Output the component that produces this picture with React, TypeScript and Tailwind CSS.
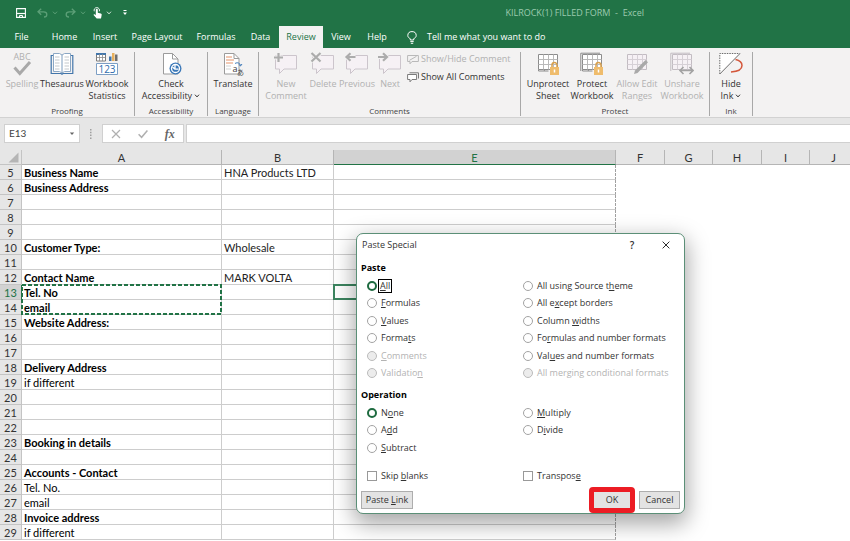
import type { ReactNode } from 'react';
import clsx from 'clsx';

type RibbonButtonProps = {
  icon: ReactNode;
  lines: string[];
  width: string;
  disabled?: boolean;
  menu?: boolean;
};

const TABS = [
  { name: 'File', width: 'w-[43px]' },
  { name: 'Home', width: 'w-[43px]' },
  { name: 'Insert', width: 'w-[38px]' },
  { name: 'Page Layout', width: 'w-[66px]' },
  { name: 'Formulas', width: 'w-[52px]' },
  { name: 'Data', width: 'w-[37px]' },
  { name: 'Review', width: 'w-[44px]' },
  { name: 'View', width: 'w-[36px]' },
  { name: 'Help', width: 'w-[36px]' },
];

const ROWS: { n: number; a?: string; b?: string; bold?: boolean }[] = [
  { n: 5, a: 'Business Name', b: 'HNA Products LTD', bold: true },
  { n: 6, a: 'Business Address', bold: true },
  { n: 7 },
  { n: 8 },
  { n: 9 },
  { n: 10, a: 'Customer Type:', b: 'Wholesale', bold: true },
  { n: 11 },
  { n: 12, a: 'Contact Name', b: 'MARK VOLTA', bold: true },
  { n: 13, a: 'Tel. No', bold: true },
  { n: 14, a: 'email', bold: true },
  { n: 15, a: 'Website Address:', bold: true },
  { n: 16 },
  { n: 17 },
  { n: 18, a: 'Delivery Address', bold: true },
  { n: 19, a: 'if different' },
  { n: 20 },
  { n: 21 },
  { n: 22 },
  { n: 23, a: 'Booking in details', bold: true },
  { n: 24 },
  { n: 25, a: 'Accounts - Contact', bold: true },
  { n: 26, a: 'Tel. No.' },
  { n: 27, a: 'email' },
  { n: 28, a: 'Invoice address', bold: true },
  { n: 29, a: 'if different' },
];

// "_" goes before the access key letter
const PASTE_LEFT = ['_All', '_Formulas', '_Values', 'Forma_ts', '_Comments', 'Validatio_n'];
const PASTE_RIGHT = [
  'All using Source t_heme',
  'All e_xcept borders',
  'Column _widths',
  'Fo_rmulas and number formats',
  'Val_ues and number formats',
  'All mer_ging conditional formats',
];
const PASTE_DISABLED = ['_Comments', 'Validatio_n', 'All mer_ging conditional formats'];

function Caret({ className }: { className?: string }) {
  return (
    <svg viewBox="0 0 6 4" className={clsx('h-1 w-1.5 shrink-0', className)} fill="none" stroke="currentColor">
      <path d="M1 .7 3 2.9 5 .7" />
    </svg>
  );
}

function SaveIcon() {
  return (
    <svg viewBox="0 0 10 10" className="h-2.5 w-2.5" fill="none" stroke="#fff">
      <path d="M.6.6h8.8v8.8H.6z" strokeWidth="1.1" />
      <path d="M1 5.5h8" strokeWidth="1.2" />
      <path d="M3.500 9V7.500h3V9" />
    </svg>
  );
}

function UndoIcon({ flip }: { flip?: boolean }) {
  return (
    <svg viewBox="0 0 11 10" className={clsx('h-2.5 w-[11px]', flip && '-scale-x-100')} fill="none" stroke="#5c9f77" strokeWidth="1.3">
      <path d="M4.2.8 1 3.8l3.2 3M1 3.8h5.6c2 0 3.2 1 3.2 2.6S8.600 9 7 9" />
    </svg>
  );
}

function TouchIcon() {
  return (
    <svg viewBox="0 0 9 12" className="h-3 w-[9px]">
      <path d="M1.300 4.300A2.700 2.700 0 1 1 6.300 4.300" fill="none" stroke="#fff" strokeWidth=".9" />
      <path d="M2.800 2.800c0-1.400 2-1.400 2 0v3l3 .7c.7.2 1 .6.900 1.300L8 11.600H3.700L.8 8.300c-.6-.9.500-1.500 1.200-.9l.8.8z" fill="#fff" />
    </svg>
  );
}

function BulbIcon() {
  return (
    <svg viewBox="0 0 10 13" className="h-[13px] w-2.5" fill="none" stroke="#fff">
      <path d="M3.300 9V7.700C1.700 6.900.8 5.900.8 4.600a4.200 4 0 0 1 8.400 0c0 1.300-.9 2.300-2.500 3.100V9z" />
      <path d="M3.300 10.600h3.400M3.800 12.300h2.400" />
    </svg>
  );
}

function SpellingIcon() {
  return (
    <svg viewBox="0 0 24 24" className="h-6 w-6 overflow-visible">
      <text x="12" y="8" textAnchor="middle" fontSize="9" fill="#b0b0b0" fontFamily="Open Sans, sans-serif">ABC</text>
      <path d="m4.500 15.500 5.300 6L20 10" fill="none" stroke="#a9a9a9" strokeWidth="3" />
    </svg>
  );
}

function BookIcon() {
  return (
    <svg viewBox="0 0 24 24" className="h-6 w-6" fill="none">
      <path d="M3.500 1.500h6L12 3l2.500-1.500h6v18h-6L12 21l-2.500-1.500h-6z" fill="#fff" stroke="#8ba7c4" />
      <path d="M3 3.500H1.200v18H11l1 .8 1-.8h9.800v-18H21" stroke="#4276ab" strokeWidth="1.200" />
      <path d="M12 3v18" stroke="#7d9cbd" />
      <path d="M5 5h4.500M5 8h4.500M5 11h4.500M5 14h4.500M5 17h4.500M14.500 5H19M14.500 8H19M14.500 11H19M14.500 14H19M14.500 17H19" stroke="#b4babf" strokeWidth=".8" />
    </svg>
  );
}

function StatisticsIcon() {
  return (
    <svg viewBox="0 0 24 24" className="h-6 w-6" fill="none">
      <path d="M1.500 1.500h9v7.500h-9z" fill="#fff" stroke="#7b7b7b" />
      <path d="M1 2h10" stroke="#4276ab" strokeWidth="2" />
      <path d="M4.500 2v7M7.500 2v7M1.500 5.500h9" stroke="#8b8b8b" strokeWidth=".8" />
      <path d="M14 4.500h2.500V9H14z" fill="#4276ab" />
      <path d="M17 1h2.500v8H17z" fill="#e8b05c" />
      <path d="M20 2.500h2.500V9H20z" fill="#6f6f6f" />
      <path d="M1.500 11.500h21v11h-21z" fill="#fff" stroke="#7d9fc4" />
      <text x="12" y="21" textAnchor="middle" fontSize="10" fill="#2f6cad" fontFamily="Open Sans, sans-serif">123</text>
    </svg>
  );
}

function AccessibilityIcon() {
  return (
    <svg viewBox="0 0 24 24" className="h-6 w-6" fill="none">
      <path d="M4.500 1.500h9L19 7v15H4.500z" fill="#fff" stroke="#9b9b9b" />
      <path d="M13.500 1.500V7H19" stroke="#9b9b9b" />
      <circle cx="16.500" cy="16.500" r="6" fill="#3b78b8" />
      <circle cx="16.500" cy="16.500" r="4" stroke="#fff" strokeWidth="1.300" />
      <path d="M16 13v4.200h3.500M13.500 15l2.500 2.200" stroke="#fff" strokeWidth="1.300" />
    </svg>
  );
}

function TranslateIcon() {
  return (
    <svg viewBox="0 0 24 24" className="h-6 w-6" fill="none">
      <path d="M3.500 1.500h9.500L18 6.500V22H3.500z" fill="#fff" stroke="#9b9b9b" />
      <path d="M13 1.500v5h5" stroke="#9b9b9b" />
      <path d="M5 5h6M5 8h8M5 11h7" stroke="#e5946a" strokeWidth="1.100" />
      <path d="M5 14h5M5 17h5" stroke="#d3d3d3" />
      <path d="M14 11.500c2.500-1.500 5-.5 5.500 2m-1.800-1.200 1.800 1.700 1.500-2" stroke="#3b78b8" />
      <text x="11.500" y="20" fontSize="9" fill="#3c3c3c" fontFamily="Open Sans, sans-serif">a</text>
      <text x="16" y="22.500" fontSize="7" fill="#3c3c3c" fontFamily="Noto Sans CJK JP, sans-serif">あ</text>
    </svg>
  );
}

function CommentIcon({ mark }: { mark: 'plus' | 'cross' | 'left' | 'right' }) {
  const marks = {
    plus: 'M4.500 1v9M0 5.500h9',
    cross: 'M.5 1l9 8.500M9.500 1l-9 8.500',
    left: 'M10.500 5H1.500M5.500 1.300 1.500 5l4 3.700',
    right: 'M0 5h9M5 1.300 9 5 5 8.700',
  };
  return (
    <svg viewBox="0 0 24 24" className="h-6 w-6 overflow-visible" fill="none">
      <path d="M1.500 3.500h21v13.500H10L5.500 21.500V17h-4z" fill="#f6f1f5" stroke="#ccc5cc" />
      <path d={marks[mark]} stroke="#f3f2f2" strokeWidth="4" />
      <path d={marks[mark]} stroke="#acacac" strokeWidth="2.200" />
    </svg>
  );
}

function SmallCommentIcon({ double }: { double?: boolean }) {
  return (
    <svg viewBox="0 0 12 11" className="h-[11px] w-3" fill="none" stroke={double ? '#7b7b7b' : '#b9b9b9'}>
      {double ? (
        <>
          <path d="M2.500.8h9v5.700" />
          <path d="M.6 2.500h9v5H5L3 9.800V7.500H.6z" fill="#fff" />
        </>
      ) : (
        <>
          <path d="M.6 1.500h10.800v6H5L3 9.800V7.500H.6z" />
          <path d="m2.500 6.300 7-4" />
        </>
      )}
    </svg>
  );
}

function SheetIcon({ faded, double, children }: { faded?: boolean; double?: boolean; children?: ReactNode }) {
  const stroke = faded ? '#c2bcc2' : '#8c8c8c';
  return (
    <svg viewBox="0 0 24 24" className="h-6 w-6" fill="none">
      {double && <path d="M.8 19V1.200H20" stroke={stroke} />}
      <path d="M2.500 2.500h19v15h-19z" fill={faded ? '#f6f1f5' : '#fff'} stroke={stroke} />
      <path d="M7.500 2.500v15M12.500 2.500v15M17.500 2.500v15M2.500 7.500h19M2.500 12.500h19" stroke={faded ? '#d6d0d6' : '#b9b9b9'} />
      {!faded && <path d="M2.500 17.500v1.500h10M8 19l1-1.500" stroke={stroke} />}
      {children}
    </svg>
  );
}

function Lock() {
  return (
    <>
      <path d="M16 16v-3a2.500 2.500 0 0 1 5 0v3" stroke="#d9a04b" strokeWidth="1.500" />
      <path d="M14 15h9v8h-9z" fill="#efbc6c" />
      <path d="M18.500 17.500v3" stroke="#fff" strokeWidth="1.500" />
    </>
  );
}

function InkIcon() {
  return (
    <svg viewBox="0 0 24 24" className="h-6 w-6" fill="none">
      <path d="M.8 1.500h20L.8 22z" fill="#fff" />
      <path d="M.8 22V1.500h20" stroke="#6c6c6c" strokeDasharray="1.500 1" />
      <path d="M.8 22 21 1.500" stroke="#6c6c6c" />
      <path d="M16.500 7.500c4 .8 6.500 3 6.500 6 0 3.500-4 6-11 6.500" stroke="#d4573b" strokeWidth="1.500" />
    </svg>
  );
}

function RibbonButton({ icon, lines, width, disabled, menu }: RibbonButtonProps) {
  return (
    <button
      type="button"
      disabled={disabled}
      className={clsx('flex shrink-0 flex-col items-center leading-3', width, disabled ? 'text-[#b1b1b1]' : 'text-[#333]')}
    >
      <span className="mb-0.5">{icon}</span>
      {lines.map((line, i) => (
        <span key={line} className="flex items-center gap-0.5 whitespace-nowrap">
          {line}
          {menu && i === lines.length - 1 && <Caret />}
        </span>
      ))}
    </button>
  );
}

function RibbonGroup({ label, width, children }: { label: string; width: string; children: ReactNode }) {
  return (
    <section aria-label={label} className={clsx('flex shrink-0 flex-col border-r border-[#a8a8a8]', width)}>
      <div className="flex flex-1 justify-center">{children}</div>
      <div className="text-center text-[8px] leading-[10px] text-[#444]">{label}</div>
    </section>
  );
}

function TitleBar() {
  return (
    <header className="flex h-[26px] items-center">
      <div className="flex items-center pl-4 text-[#5c9f77]">
        <button type="button" aria-label="Save"><SaveIcon /></button>
        <button type="button" aria-label="Undo" className="ml-[11px] flex items-center gap-1"><UndoIcon /><Caret /></button>
        <button type="button" aria-label="Redo" className="ml-[7px] flex items-center gap-1"><UndoIcon flip /><Caret /></button>
        <button type="button" aria-label="Touch mode" className="ml-[7px] flex items-center gap-1 text-[#cfe4d7]"><TouchIcon /><Caret /></button>
        <button type="button" aria-label="Customize toolbar" className="ml-2.5">
          <svg viewBox="0 0 6 6" className="h-1.5 w-1.5" fill="#fff"><path d="M1.500 0h3v1h-3zM1 2.500h4L3 5z" /></svg>
        </button>
      </div>
      <h1 className="ml-auto mr-[206px] whitespace-pre text-[9px] text-[#9ccaae]">KILROCK(1) FILLED FORM  -  Excel</h1>
    </header>
  );
}

function TabStrip() {
  return (
    <nav className="flex h-[22px] items-stretch text-[9px] text-white">
      {TABS.map(({ name, width }) => (
        <button
          key={name}
          type="button"
          className={clsx('shrink-0 whitespace-nowrap', width, name === 'Review' && 'bg-[#f3f2f2] text-[#217346]')}
        >
          {name}
        </button>
      ))}
      <button type="button" className="ml-3 flex items-center gap-2.5 whitespace-nowrap">
        <BulbIcon />
        Tell me what you want to do
      </button>
    </nav>
  );
}

function Ribbon() {
  return (
    <div className="flex h-[70px] overflow-hidden border-b border-[#d2d2d2] bg-[#f3f2f2] pb-px pt-1 text-[9px]">
      <RibbonGroup label="Proofing" width="w-[135px]">
        <RibbonButton icon={<SpellingIcon />} lines={['Spelling']} width="w-[36px]" disabled />
        <RibbonButton icon={<BookIcon />} lines={['Thesaurus']} width="w-[44px]" />
        <RibbonButton icon={<StatisticsIcon />} lines={['Workbook', 'Statistics']} width="w-[46px]" />
      </RibbonGroup>
      <RibbonGroup label="Accessibility" width="w-[73px]">
        <RibbonButton icon={<AccessibilityIcon />} lines={['Check', 'Accessibility']} width="w-[62px]" menu />
      </RibbonGroup>
      <RibbonGroup label="Language" width="w-[51px]">
        <RibbonButton icon={<TranslateIcon />} lines={['Translate']} width="w-[42px]" />
      </RibbonGroup>
      <RibbonGroup label="Comments" width="w-[262px]">
        <RibbonButton icon={<CommentIcon mark="plus" />} lines={['New', 'Comment']} width="w-[42px]" disabled />
        <RibbonButton icon={<CommentIcon mark="cross" />} lines={['Delete']} width="w-[32px]" disabled />
        <RibbonButton icon={<CommentIcon mark="left" />} lines={['Previous']} width="w-[36px]" disabled />
        <RibbonButton icon={<CommentIcon mark="right" />} lines={['Next']} width="w-[30px]" disabled />
        <div className="ml-0.5 flex w-[107px] flex-col gap-1.5 whitespace-nowrap pt-px leading-3 text-[#333]">
          <button type="button" disabled className="flex items-center gap-0.5 text-[#b1b1b1]">
            <SmallCommentIcon />
            Show/Hide Comment
          </button>
          <button type="button" className="flex items-center gap-0.5">
            <SmallCommentIcon double />
            Show All Comments
          </button>
        </div>
      </RibbonGroup>
      <RibbonGroup label="Protect" width="w-[189px]">
        <RibbonButton icon={<SheetIcon><Lock /></SheetIcon>} lines={['Unprotect', 'Sheet']} width="w-[44px]" />
        <RibbonButton icon={<SheetIcon double><Lock /></SheetIcon>} lines={['Protect', 'Workbook']} width="w-[44px]" />
        <RibbonButton
          icon={
            <SheetIcon faded>
              <path d="m9 22 1-3.500L20.500 8l2.500 2.300L12.500 21z" fill="#a9a9a9" />
            </SheetIcon>
          }
          lines={['Allow Edit', 'Ranges']}
          width="w-[46px]"
          disabled
        />
        <RibbonButton
          icon={
            <SheetIcon faded double>
              <path d="M10 18.500h13M13.500 15 10 18.500l3.500 3.500M19.500 15l3.500 3.500-3.500 3.500" stroke="#a3a3a3" strokeWidth="1.600" />
            </SheetIcon>
          }
          lines={['Unshare', 'Workbook']}
          width="w-[44px]"
          disabled
        />
      </RibbonGroup>
      <RibbonGroup label="Ink" width="w-[43px]">
        <RibbonButton icon={<InkIcon />} lines={['Hide', 'Ink']} width="w-[36px]" menu />
      </RibbonGroup>
    </div>
  );
}

function FormulaBar() {
  return (
    <div className="flex h-8 bg-[#e6e6e6] pb-[7px] pl-1 pt-1.5">
      <div className="flex w-[76px] items-center border border-[#d0d0d0] bg-white pr-1">
        <input aria-label="Name box" defaultValue="E13" className="w-full min-w-0 bg-transparent pl-1 font-['Lato',sans-serif] text-[10px] text-[#444] outline-none" />
        <button type="button" aria-label="Show names">
          <svg viewBox="0 0 6 4" className="h-1 w-1.5" fill="#666"><path d="M.8.5h4.400L3 3z" /></svg>
        </button>
      </div>
      <div className="flex w-[22px] items-center justify-center">
        <svg viewBox="0 0 2 10" className="h-2.5 w-0.5" fill="#a0a0a0"><path d="M0 0h1.500v1.500H0zM0 2.800h1.500v1.500H0zM0 5.600h1.500v1.500H0zM0 8.400h1.500v1.500H0z" /></svg>
      </div>
      <div className="flex w-[82px] items-center justify-around border border-[#d0d0d0] bg-white">
        <button type="button" aria-label="Cancel entry">
          <svg viewBox="0 0 10 10" className="h-2.5 w-2.5" stroke="#b0b0b0" strokeWidth="1.200"><path d="m1 1 8 8M9 1 1 9" /></svg>
        </button>
        <button type="button" aria-label="Accept entry">
          <svg viewBox="0 0 10 10" className="h-2.5 w-2.5" fill="none" stroke="#b0b0b0" strokeWidth="1.500"><path d="m.6 5.300 3 3L9.400 1.500" /></svg>
        </button>
        <button type="button" className="font-['Liberation_Serif',serif] text-[12px] font-bold italic leading-3 text-[#666]">fx</button>
      </div>
      <input aria-label="Formula" className="ml-0.5 min-w-0 flex-1 border border-r-0 border-[#d0d0d0] bg-white px-1 text-[10px] outline-none" />
    </div>
  );
}

function Sheet() {
  return (
    <div className="flex-1 overflow-hidden">
      <table className="w-[858px] table-fixed border-separate border-spacing-0 font-['Lato',sans-serif] text-[11px] leading-[13px] text-black">
        <colgroup>
          <col className="w-[22px]" />
          <col className="w-[200px]" />
          <col className="w-[112px]" />
          <col className="w-[282px]" />
          <col className="w-[49px]" />
          <col className="w-[48px]" />
          <col className="w-[49px]" />
          <col className="w-[48px]" />
          <col className="w-[48px]" />
        </colgroup>
        <thead>
          <tr className="h-[15px] bg-[#e6e6e6]">
            <th className="border-b border-r border-[#c4c4c4] p-0 pr-0.5">
              <svg viewBox="0 0 11 11" className="ml-auto h-[11px] w-[11px]" fill="#b5b5b5"><path d="M10.500.5v10H.5z" /></svg>
            </th>
            {['A', 'B', 'E', 'F', 'G', 'H', 'I', 'J'].map((col) => (
              <th
                key={col}
                scope="col"
                className={clsx(
                  'border-b border-r p-0 pt-px font-normal',
                  col === 'E' ? 'border-b-[#217346] border-r-[#b5b5b5] bg-[#d2d2d2] text-[#217346]' : 'border-[#b5b5b5] text-[#333]',
                )}
              >
                {col}
              </th>
            ))}
          </tr>
        </thead>
        <tbody>
          {ROWS.map(({ n, a, b, bold }) => (
            <tr key={n} className="h-[15px]">
              <th
                scope="row"
                className={clsx(
                  'border-b border-r border-[#c4c4c4] p-0 pt-px text-center font-normal',
                  n === 13 ? 'border-r-[#217346] bg-[#d2d2d2] text-[#217346]' : 'bg-[#e6e6e6] text-[#333]',
                )}
              >
                {n}
              </th>
              <td className={clsx('relative border-b border-r border-[#cdcdcd] p-0 pl-0.5 pt-px', bold && 'font-bold')}>
                {a}
                {n === 13 && (
                  <svg className="absolute -left-px -top-px z-10 h-[31px] w-[201px]" fill="none">
                    <rect x="1" y="1" width="199" height="29" stroke="#217346" strokeWidth="2" strokeDasharray="4 2" />
                  </svg>
                )}
              </td>
              <td className="border-b border-r border-[#cdcdcd] p-0 pl-0.5 pt-px text-[#222]">{b}</td>
              <td className="relative border-b border-[#cdcdcd] p-0 [border-right:1px_dashed_#a0a0a0]">
                {n === 13 && <span className="absolute -inset-px border-2 border-[#3c8560]" />}
              </td>
              <td colSpan={5} className="bg-white p-0" />
            </tr>
          ))}
        </tbody>
      </table>
    </div>
  );
}

function AccessLabel({ text }: { text: string }) {
  const at = text.indexOf('_');
  return (
    <span>
      {text.slice(0, at)}
      <span className="underline underline-offset-1">{text[at + 1]}</span>
      {text.slice(at + 2)}
    </span>
  );
}

function Option({ name, text, checked, disabled, focused }: { name: string; text: string; checked?: boolean; disabled?: boolean; focused?: boolean }) {
  return (
    <label className={clsx('flex items-center gap-1 whitespace-nowrap', disabled && 'text-[#b3b3b3]')}>
      <input
        type="radio"
        name={name}
        defaultChecked={checked}
        disabled={disabled}
        className="h-2.5 w-2.5 shrink-0 appearance-none rounded-full border border-[#a3a3a3] bg-white checked:border-2 checked:border-[#1e6b40] disabled:border-[#bbb] disabled:bg-[#ececec]"
      />
      <span className={clsx(focused && '-m-0.5 px-px outline outline-black')}>
        <AccessLabel text={text} />
      </span>
    </label>
  );
}

function CheckOption({ text }: { text: string }) {
  return (
    <label className="flex items-center gap-1 whitespace-nowrap">
      <input type="checkbox" className="h-2.5 w-2.5 shrink-0 appearance-none border border-[#999] bg-white" />
      <AccessLabel text={text} />
    </label>
  );
}

function PasteSpecialDialog() {
  const button = 'h-[18px] border border-[#adadad] bg-[#e3e3e3]';
  const columns = 'grid grid-flow-col grid-cols-[156px_1fr] pl-2.5';
  return (
    <div
      role="dialog"
      aria-labelledby="dialog-title"
      className="absolute left-[356px] top-[233px] z-20 w-[329px] rounded-[7px] border border-[#5b8f77] bg-white pb-1 text-[9px] leading-3 text-[#333] shadow-[0_8px_22px_2px_rgba(0,0,0,0.35)]"
    >
      <div className="flex h-[22px] items-center pl-[5px]">
        <h2 id="dialog-title" className="flex-1">Paste Special</h2>
        <button type="button" aria-label="Help" className="w-[34px] text-[10px] font-semibold">?</button>
        <button type="button" aria-label="Close" className="mr-px flex w-[34px] justify-center">
          <svg viewBox="0 0 10 10" className="h-2 w-2" stroke="#222" strokeWidth="1.200"><path d="m.8.8 8.400 8.400M9.200.8.8 9.200" /></svg>
        </button>
      </div>

      <h3 id="paste-title" className="mt-1 pl-1 font-bold leading-4 text-black">Paste</h3>
      <div role="radiogroup" aria-labelledby="paste-title" className={clsx(columns, 'mt-px h-[105px] grid-rows-6')}>
        {[...PASTE_LEFT, ...PASTE_RIGHT].map((text, i) => (
          <Option key={text} name="paste" text={text} checked={i === 0} focused={i === 0} disabled={PASTE_DISABLED.includes(text)} />
        ))}
      </div>

      <h3 id="operation-title" className="mt-[5px] pl-1 font-bold leading-4 text-black">Operation</h3>
      <div role="radiogroup" aria-labelledby="operation-title" className={clsx(columns, 'mt-px h-[53px] grid-rows-3')}>
        {['N_one', 'A_dd', '_Subtract', '_Multiply', 'D_ivide'].map((text, i) => (
          <Option key={text} name="operation" text={text} checked={i === 0} />
        ))}
      </div>

      <div className={clsx(columns, 'mt-[11px] h-4')}>
        <CheckOption text="Skip _blanks" />
        <CheckOption text="Transpos_e" />
      </div>

      <div className="mt-[7px] flex pl-1 pr-1">
        <button type="button" className={clsx(button, 'w-[52px]')}><AccessLabel text="Paste _Link" /></button>
        <button type="button" className={clsx(button, 'relative ml-auto mr-2 w-[38px]')}>
          OK
          <span className="absolute -inset-[5px] rounded-sm border-[5px] border-[#ec1c24]" />
        </button>
        <button type="button" className={clsx(button, 'w-[41px]')}>Cancel</button>
      </div>
    </div>
  );
}

export default function App() {
  return (
    <div className="relative flex h-screen flex-col overflow-hidden bg-white font-['Open_Sans',sans-serif]">
      <div className="bg-[#217346]">
        <TitleBar />
        <TabStrip />
      </div>
      <Ribbon />
      <FormulaBar />
      <Sheet />
      <PasteSpecialDialog />
    </div>
  );
}
